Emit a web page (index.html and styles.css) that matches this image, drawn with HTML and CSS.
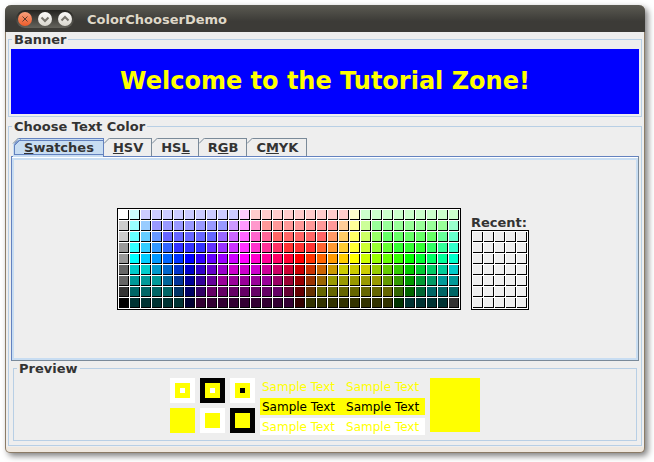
FILE: index.html
```html
<!DOCTYPE html>
<html lang="en">
<head>
<meta charset="utf-8">
<title>ColorChooserDemo</title>
<link rel="stylesheet" href="styles.css">
</head>
<body>
<div class="window">
  <header class="titlebar">
    <div class="controls">
      <button class="control close" aria-label="Close"><svg viewBox="0 0 14 14"><path d="M4.5 4.5l5 5M9.5 4.5l-5 5"/></svg></button>
      <button class="control" aria-label="Minimize"><svg viewBox="0 0 14 14"><path d="M3.5 5.5L7 9l3.500-3.500"/></svg></button>
      <button class="control" aria-label="Maximize"><svg viewBox="0 0 14 14"><path d="M3.500 8.500L7 5l3.500 3.500"/></svg></button>
    </div>
    <h1 class="title">ColorChooserDemo</h1>
  </header>
  <main class="content">
    <fieldset class="group">
      <legend>Banner</legend>
      <div class="banner">Welcome to the Tutorial Zone!</div>
    </fieldset>
    <fieldset class="group chooser">
      <legend>Choose Text Color</legend>
      <div class="tabs" role="tablist">
        <button class="tab selected" role="tab" aria-selected="true"><svg class="corner" viewBox="0 0 6 6"><path class="cut" d="M0 0h6L0 6z"/><path class="edge" d="M0 5.500L5.500 0"/><path class="edge inner" d="M1.500 7.500L7.500 1.500"/></svg><u>S</u>watches</button>
        <button class="tab" role="tab"><svg class="corner" viewBox="0 0 6 6"><path class="cut" d="M0 0h6L0 6z"/><path class="edge" d="M0 5.500L5.500 0"/></svg><u>H</u>SV</button>
        <button class="tab" role="tab"><svg class="corner" viewBox="0 0 6 6"><path class="cut" d="M0 0h6L0 6z"/><path class="edge" d="M0 5.500L5.500 0"/></svg>HS<u>L</u></button>
        <button class="tab" role="tab"><svg class="corner" viewBox="0 0 6 6"><path class="cut" d="M0 0h6L0 6z"/><path class="edge" d="M0 5.500L5.500 0"/></svg>R<u>G</u>B</button>
        <button class="tab" role="tab"><svg class="corner" viewBox="0 0 6 6"><path class="cut" d="M0 0h6L0 6z"/><path class="edge" d="M0 5.500L5.500 0"/></svg>C<u>M</u>YK</button>
      </div>
      <div class="panel" role="tabpanel">
        <div class="palettes">
          <div class="swatches main" id="swatches"></div>
          <div class="recent">
            <div class="recent-label">Recent:</div>
            <div class="swatches history" id="recent"></div>
          </div>
        </div>
      </div>
      <fieldset class="group preview">
        <legend>Preview</legend>
        <div class="samples">
          <div class="squares">
            <i class="sq on-white ring"></i><i class="sq on-black ring"></i><i class="sq on-white ring dark"></i>
            <i class="sq"></i><i class="sq on-white"></i><i class="sq on-black"></i>
          </div>
          <div class="texts">
            <div class="line"><span>Sample Text</span><span>Sample Text</span></div>
            <div class="line filled"><span>Sample Text</span><span>Sample Text</span></div>
            <div class="line white"><span>Sample Text</span><span>Sample Text</span></div>
          </div>
          <div class="block"></div>
        </div>
      </fieldset>
    </fieldset>
  </main>
</div>
<script src="swatches.js"></script>
</body>
</html>
```
FILE: styles.css
```css
* { box-sizing: border-box; }
body {
  margin: 0;
  padding: 5px 9px 9px 5px;
  min-height: 100vh;
  display: flex;
  background: #fff;
  color: #333;
  font: bold 13px/15px "DejaVu Sans", sans-serif;
}
button { font: inherit; color: inherit; }
.window {
  flex: 1;
  display: flex;
  flex-direction: column;
  border: 1px solid #8b7b66;
  border-top: 0;
  border-radius: 6px 6px 5px 5px;
  background: #efe8df;
  padding-bottom: 5px;
  box-shadow: 3px 3px 6px rgba(0, 0, 0, .5);
}
.titlebar {
  flex: none;
  display: flex;
  align-items: center;
  gap: 13px;
  height: 27px;
  margin: 0 -1px;
  padding: 1px 11px 0;
  border-radius: 6px 6px 0 0;
  background: linear-gradient(#5b5a52, #3c3b37 60%);
}
.controls {
  display: flex;
  align-items: center;
  gap: 6px;
  height: 18px;
  padding: 0 2px;
  border-radius: 9px;
  background: linear-gradient(#24231f, #64635c);
}
.control {
  width: 14px;
  height: 14px;
  padding: 0;
  border: 0;
  border-radius: 50%;
  background: linear-gradient(#fbfaf8, #d9d6ce);
}
.control svg { display: block; fill: none; stroke: #77746c; stroke-width: 2; }
.close { background: linear-gradient(#f8a07c, #ee5c2b); }
.close svg { stroke: #5d3a2b; stroke-width: 1; }
.title { margin: 0; color: #dfd8c8; font-size: 13px; }
.content {
  flex: 1;
  display: flex;
  flex-direction: column;
  gap: 2px;
  padding: 0 2px 1px;
  background: #eee;
}
.group {
  min-width: 0;
  margin: 0;
  padding: 2px;
  border: 1px solid #b8cfe5;
}
legend { margin-left: 1px; padding: 0 2px; }
.banner {
  background: #00f;
  color: #ff0;
  text-align: center;
  font-size: 24px;
  line-height: 65px;
}
.chooser { flex: 1; padding: 4px 2px; }
.tabs { display: flex; padding-left: 2px; }
.tab {
  position: relative;
  height: 18px;
  padding: 0 8px 0 9px;
  border: solid #7a8a99;
  border-width: 1px 1px 0 0;
  background: #eee;
}
.tab u { text-decoration-thickness: 1px; text-underline-offset: 1px; text-decoration-skip-ink: none; }
.corner { position: absolute; z-index: 1; left: 0; top: -1px; width: 6px; height: 6px; overflow: visible; }
.cut { fill: #eee; }
.edge { fill: none; stroke: #7a8a99; }
.inner { stroke: #6382bf; }
.selected {
  height: 19px;
  margin-bottom: -1px;
  padding: 0 9px 1px 11px;
  border-color: #6382bf;
  background: #c8ddf2;
}
.selected::before {
  content: "";
  position: absolute;
  inset: 1px 0 2px 1px;
  border: 1px solid #6382bf;
  border-right: 0;
  border-top-left-radius: 6px;
}
.panel {
  display: flex;
  justify-content: center;
  align-items: center;
  height: 205px;
  padding-right: 4px;
  border: 1px solid #6382bf;
  border-right-color: #7a8a99;
  border-bottom-color: #7a8a99;
  box-shadow: inset 0 1px #fff, inset 0 3px #c8ddf2, inset 0 0 0 2px #c8ddf2;
}
.palettes { display: flex; align-items: flex-end; gap: 10px; }
.swatches {
  display: grid;
  grid-auto-rows: 10px;
  gap: 1px;
  width: max-content;
  padding: 1px;
  border: 1px solid #000;
  background: #fff;
}
.main { grid-template-columns: repeat(31, 10px); }
.history { grid-template-columns: repeat(5, 10px); }
.swatch { border: solid #000; border-width: 0 1px 1px 0; background: #eee; }
.preview { margin: 0 2px; padding: 2px; }
.samples { display: flex; justify-content: center; gap: 5px; height: 60px; }
.squares { display: grid; grid-template-columns: repeat(3, 25px); grid-auto-rows: 25px; gap: 5px; }
.sq { display: grid; background: #ff0; }
.on-white { border: 5px solid #fff; }
.on-black { border: 5px solid #000; }
.ring::after { content: ""; width: 5px; height: 5px; margin: auto; background: #fff; }
.dark::after { background: #000; }
.texts {
  display: grid;
  gap: 3px;
  grid-template-columns: 165px;
  grid-auto-rows: 17px;
  font-size: 12px;
  font-weight: normal;
  line-height: 18px;
}
.line { display: flex; gap: 11px; padding: 0 2px; color: #ff0; white-space: nowrap; }
.filled { background: #ff0; color: #000; }
.white { background: #fff; }
.block { width: 50px; height: 54px; background: #ff0; }
```
FILE: swatches.js
```js
// Each row: colour and how many adjacent cells use it.
const rows = [
  "fff ccffff ccccff*9 ffccff ffcccc*9 ffffcc ccffcc*9",
  "ccc 99ffff 99ccff 9999ff*7 cc99ff ff99ff ff99cc ff9999*7 ffcc99 ffff99 ccff99 99ff99*7 99ffcc",
  "ccc 66ffff 66ccff 6699ff 6666ff*5 9966ff cc66ff ff66ff ff66cc ff6699 ff6666*5 ff9966 ffcc66 ffff66 ccff66 99ff66 66ff66*5 66ff99 66ffcc",
  "999 33ffff 33ccff 3399ff 3366ff 3333ff*3 6633ff 9933ff cc33ff ff33ff ff33cc ff3399 ff3366 ff3333*3 ff6633 ff9933 ffcc33 ffff33 ccff33 99ff33 66ff33 33ff33*3 33ff66 33ff99 33ffcc",
  "999 0ff 0cf 09f 06f 03f 00f 30f 60f 90f c0f f0f f0c f09 f06 f03 f00 f30 f60 f90 fc0 ff0 cf0 9f0 6f0 3f0 0f0 0f3 0f6 0f9 0fc",
  "666 0cc*2 09c 06c 03c 00c 30c 60c 90c c0c*3 c09 c06 c03 c00 c30 c60 c90 cc0*3 9c0 6c0 3c0 0c0 0c3 0c6 0c9 0cc",
  "666 099*3 069 039 009 309 609 909*5 906 903 900 930 960 990*5 690 390 090 093 096 099*2",
  "333 066*4 036 006 306 606*7 603 600 630 660*7 360 060 063 066*3",
  "000 033*5 003 303*9 300 330*8 030 033*4 333"
];

function addSwatch(parent, color) {
  const cell = document.createElement("div");
  cell.className = "swatch";
  if (color) cell.style.backgroundColor = "#" + color;
  parent.append(cell);
}

const palette = document.getElementById("swatches");
for (const row of rows) {
  for (const run of row.split(" ")) {
    const [color, count = 1] = run.split("*");
    for (let i = 0; i < count; i++) addSwatch(palette, color);
  }
}

const recent = document.getElementById("recent");
for (let i = 0; i < 35; i++) addSwatch(recent);
```
